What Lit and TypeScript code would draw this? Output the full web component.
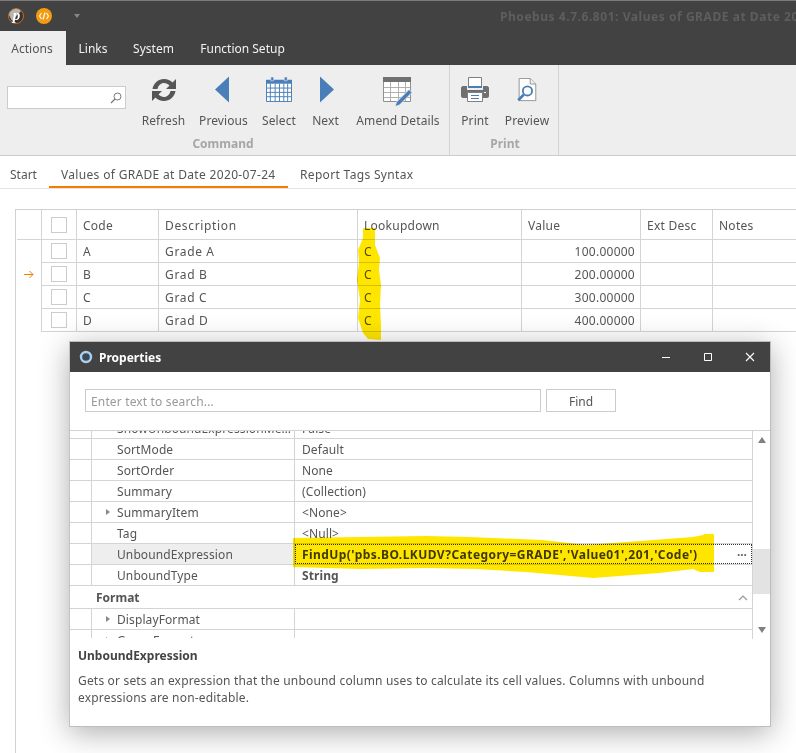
import { LitElement, html, css, svg } from "lit";
import { customElement } from "lit/decorators.js";

const refreshPath = "M.5 11C1.5 5 6.5 1 12 1c3.5 0 6.5 1.5 8.5 3.5L24 1v10H14l3.500-3.500C16 6 14 5 12 5 8.800 5 6.300 7.500 5.500 11z";
const refreshIcon = svg`<svg class="m3" width="24" height="24" viewBox="0 0 24 24" fill="#555"><path d=${refreshPath}/><path transform="rotate(180 12 12)" d=${refreshPath}/></svg>`;
const prevIcon = svg`<svg class="m1 ml" width="14" height="27" viewBox="0 0 15 28"><path d="M15 0V28L0 14z" fill="#4a7eb8"/></svg>`;
const nextIcon = svg`<svg class="m1 mr" width="14" height="27" viewBox="0 0 15 28"><path d="M0 0V28L15 14z" fill="#4a7eb8"/></svg>`;
const calIcon = svg`<svg class="m2" width="26" height="25" viewBox="0 0 27 26"><path d="M.500 3.500h26v22H.500z" fill="#fff" stroke="#4a7eb8"/><path d="M0 3h27v4H0z" fill="#4a7eb8"/><path d="M4.500 7v18M9.500 7v18M14 7v18M18.500 7v18M22.500 7v18M1 11.500h25M1 16h25M1 20.500h25" stroke="#4a7eb8" fill="none"/><path d="M5 0h3v4H5zM19 0h3v4h-3z" fill="#4a7eb8" stroke="#eee" stroke-width=".6"/></svg>`;
const amendIcon = svg`<svg class="m2" width="31" height="31" viewBox="0 0 31 31"><path d="M.5 .5h27v24H.500z" fill="#fff" stroke="#909090"/><path d="M0 0h28v5H0z" fill="#707070"/><path d="M1 10.500h26M1 15.500h26M1 20.500h26M7.500 5v19M15.500 5v19M22.500 5v19" stroke="#b0b0b0" fill="none"/><path d="M12 29.500l1.500-4.500L26 12.500l3 3L16.500 28z" fill="#4a7eb8" stroke="#eee" stroke-width=".8"/></svg>`;
const printIcon = svg`<svg class="m2" width="28" height="25" viewBox="0 0 28 25"><path d="M7.500 .5h13v10h-13z" fill="#fff" stroke="#808080"/><path d="M7 9h14v2H7z" fill="#4a7eb8"/><path d="M2 9h4v4h16V9h4c1 0 2 1 2 2v8c0 1-1 2-2 2h-4v-4H6v4H2c-1 0-2-1-2-2v-8c0-1 1-2 2-2z" fill="#707070"/><path d="M6.500 15.500h15v9h-15z" fill="#fff" stroke="#808080"/><path d="M10 18.500h8M10 21.500h8" stroke="#4a7eb8" fill="none"/><path d="M23 15h2v1h-2z" fill="#fff"/></svg>`;
const previewIcon = svg`<svg class="m3" width="22" height="24" viewBox="0 0 22 26"><path d="M2.500 .5h12l6 6v18h-18z" fill="#fff" stroke="#909090"/><path d="M14.500 .5v6h6" fill="#eee" stroke="#909090"/><circle cx="11.500" cy="14" r="5" fill="#fff" stroke="#4a7eb8" stroke-width="2"/><path d="M7.500 18L1.500 24" stroke="#4a7eb8" stroke-width="3" fill="none"/></svg>`;

const columns = ["Code", "Description", "Lookupdown", "Value", "Ext Desc", "Notes"];
const rows = [
  ["A", "Grade A", "C", "100.00000"],
  ["B", "Grad B", "C", "200.00000"],
  ["C", "Grad C", "C", "300.00000"],
  ["D", "Grad D", "C", "400.00000"],
];
const props: [string, string, string?][] = [
  ["ShowUnboundExpressionMenu", "False"],
  ["SortMode", "Default"],
  ["SortOrder", "None"],
  ["Summary", "(Collection)"],
  ["SummaryItem", "<None>", "exp"],
  ["Tag", "<Null>"],
  ["UnboundExpression", "FindUp('pbs.BO.LKUDV?Category=GRADE','Value01',201,'Code')", "sel"],
  ["UnboundType", "String", "bold"],
];

@customElement("app-root")
export class AppRoot extends LitElement {
  static styles = css`
    :host { display: block; position: relative; width: 796px; height: 753px; overflow: hidden; background: #fff;
      font-family: "Noto Sans", "Open Sans", sans-serif; font-size: 12px; color: #555; }
    .top { background: #424242; height: 65px; border-top: 1px solid #7a7a7a; box-sizing: border-box; }
    .qat { height: 30px; display: flex; align-items: center; padding-left: 8px; position: relative; }
    .qat .code { margin-left: 12px; }
    .qat .caret { margin-left: 22px; width: 0; height: 0; border: 3px solid transparent; border-top: 4px solid #888; border-bottom: 0; }
    .wintitle { margin-left: auto; width: 296px; overflow: hidden; white-space: nowrap; font-weight: 700; color: #5e5e5e; font-size: 12px; letter-spacing: .55px; }
    .tabs { display: flex; height: 34px; }
    .tabs div { color: #f2f2f2; line-height: 36px; text-align: center; box-sizing: border-box; }
    .tabs .active { background: #eee; color: #555; padding-right: 2px; }
    .t0 { width: 66px; } .t1 { width: 54px; } .t2 { width: 67px; } .t3 { width: 111px; }
    .ribbon { display: flex; height: 91px; background: #eee; border-bottom: 1px solid #ccc; box-sizing: border-box; }
    .searchsec { width: 135px; flex: none; padding: 21px 0 0 7px; box-sizing: border-box; }
    .searchbox { width: 119px; height: 23px; box-sizing: border-box; background: #fff; border: 1px solid #ccc; display: flex; align-items: center; justify-content: flex-end; padding-right: 3px; }
    .group { display: flex; flex-direction: column; border-right: 1px solid #d4d4d4; box-sizing: border-box; }
    .g1 { width: 315px; } .g2 { width: 109px; padding-left: 2px; }
    .btns { display: flex; }
    .btn { display: flex; flex-direction: column; align-items: center; padding-top: 10px; box-sizing: border-box; }
    .ic { height: 37px; display: flex; align-items: flex-start; }
    .m1 { margin-top: 1px; } .m2 { margin-top: 2px; } .m3 { margin-top: 3px; }
    .ml { margin-right: 3px; } .mr { margin-left: 3px; }
    .lb { line-height: 18px; white-space: nowrap; letter-spacing: .1px; }
    .glabel { line-height: 18px; margin-top: 5px; font-weight: 700; color: #a6a6a6; text-align: center; }
    .g1 .glabel { width: 176px; }
    .w0 { width: 57px; } .w1 { width: 63px; } .w2 { width: 48px; } .w3 { width: 45px; } .w4 { width: 100px; } .w5 { width: 46px; } .w6 { width: 58px; }
    .doctabs { display: flex; height: 33px; border-bottom: 1px solid #e4e4e4; box-sizing: border-box; padding-left: 10px; letter-spacing: .33px; }
    .doctabs div { line-height: 38px; white-space: nowrap; height: 32px; box-sizing: border-box; }
    .d0 { width: 39px; letter-spacing: 0; }
    .d1 { width: 239px; padding-left: 12px; border-bottom: 2px solid #f57c00; }
    .d2 { padding-left: 12px; }
    .grid { margin: 20px 0 0 15px; border-top: 1px solid #d0d0d0; border-left: 1px solid #d0d0d0; height: 600px; }
    .gr { display: grid; grid-template-columns: 25px 35px 82px 199px 164px 119px 72px 84px; letter-spacing: .25px; }
    .gr > div { border-left: 1px solid #d4d4d4; border-bottom: 1px solid #d4d4d4; box-sizing: border-box; padding-left: 6px; white-space: nowrap; height: 23px; line-height: 22px; display: flex; align-items: center; }
    .gr > div:not(.chk) { padding-top: 2px; }
    .gr > div:nth-child(4) { letter-spacing: .65px; }
    .gr > div:first-child { border-left: 0; border-bottom-color: transparent; padding: 0 0 0 8px; }
    .gr > .chk { padding-left: 9px; }
    .gr .num { justify-content: flex-end; padding: 2px 5px 0 0; }
    .head > div { height: 30px; }
    .head > div:first-child { border-bottom-color: #d4d4d4; margin-left: 1px; }
    .box { width: 16px; height: 16px; box-sizing: border-box; border: 1px solid #ccc; background: #fff; }
    .dialog { position: absolute; left: 69px; top: 341px; width: 702px; height: 386px; box-sizing: border-box; background: #fff; border: 1px solid #bdbdbd; border-left-color: #c4c4c4;
      box-shadow: 0 6px 28px rgba(0, 0, 0, .32); display: flex; flex-direction: column; }
    .dtitle { height: 30px; flex: none; background: #424242; display: flex; align-items: center; padding: 0 15px 0 9px; color: #fff; font-weight: 700; }
    .dtitle .name { margin-left: 6px; }
    .winbtns { margin-left: auto; display: flex; gap: 32px; }
    .winbtns svg { display: block; }
    .dsearch { display: flex; gap: 5px; padding: 17px 0 0 15px; height: 41px; flex: none; box-sizing: border-box; }
    .input { width: 456px; height: 23px; box-sizing: border-box; border: 1px solid #ccc; padding-left: 5px; line-height: 23px; color: #999; letter-spacing: .15px; }
    .find { width: 70px; height: 23px; box-sizing: border-box; border: 1px solid #ccc; text-align: center; line-height: 23px; }
    .pgrid { border-top: 1px solid #d4d4d4; height: 208px; flex: none; display: flex; overflow: hidden; margin-top: 17px; }
    .plist { width: 682px; flex: none; height: 207px; overflow: hidden; }
    .pinner { margin-top: -13px; }
    .prow { display: grid; grid-template-columns: 22px 203px 457px; height: 21px; border-bottom: 1px solid #d4d4d4; box-sizing: border-box; }
    .prow > div { line-height: 22px; white-space: nowrap; overflow: hidden; box-sizing: border-box; letter-spacing: .1px; }
    .gut { border-right: 1px solid #d4d4d4; }
    .pname { padding-left: 25px; border-right: 1px solid #d4d4d4; position: relative; text-overflow: ellipsis; }
    .pval { padding-left: 7px; }
    .tri { position: absolute; left: 14px; top: 7px; width: 0; height: 0; border: 3px solid transparent; border-left: 4px solid #8a8a8a; border-right: 0; }
    .prow.sel .pname { background: #eee; }
    .prow.sel > .pval { font-weight: 700; color: #3f3f3f; border: 1px dotted #333; display: flex; justify-content: space-between; padding: 0 4px 0 6px; line-height: 20px; letter-spacing: .44px; }
    .prow.bold .pval { font-weight: 700; }
    .dots { font-weight: 700; letter-spacing: 0; color: #666; }
    .cat { height: 23px; border-bottom: 1px solid #d4d4d4; box-sizing: border-box; padding: 0 4px 0 26px; line-height: 23px; font-weight: 700; display: flex; justify-content: space-between; }
    .cat svg { margin-top: 1px; }
    .scroll { flex: 1; border-left: 1px solid #d4d4d4; display: flex; flex-direction: column; }
    .arrow { height: 18px; flex: none; display: flex; align-items: center; justify-content: center; }
    .sp1 { height: 100px; flex: none; }
    .thumb { height: 45px; background: #e3e3e3; flex: none; }
    .sp2 { flex: 1; }
    .desc { padding: 8px 8px 0 8px; }
    .desc b { display: block; line-height: 18px; color: #444; }
    .desc p { margin: 7px 0 0; line-height: 17px; width: 650px; letter-spacing: .18px; }
    .hl { position: absolute; left: 0; top: 0; pointer-events: none; mix-blend-mode: multiply; }
  `;

  render() {
    return html`
      <div class="top">
        <div class="qat">
          <svg width="16" height="16" viewBox="0 0 16 16"><circle cx="8" cy="8" r="7.500" fill="#333" stroke="#c8691c"/><path d="M1 7a7 7 0 0 1 12-4L4 13z" fill="#b5b5b5"/><text x="8.500" y="12" text-anchor="middle" font-family="Liberation Serif" font-style="italic" font-weight="700" font-size="15" fill="#fff">p</text></svg>
          <svg class="code" width="16" height="16" viewBox="0 0 16 16"><circle cx="8" cy="8" r="8" fill="#f39c12"/><path d="M5.500 5L3.500 8l2 3M10.500 5l2 3-2 3M9 4.500L7 11.500" fill="none" stroke="#fff" stroke-width="1.100"/></svg>
          <div class="caret"></div>
          <div class="wintitle">Phoebus 4.7.6.801: Values of GRADE at Date 2020-07-24</div>
        </div>
        <div class="tabs">
          <div class="t0 active">Actions</div><div class="t1">Links</div><div class="t2">System</div><div class="t3">Function Setup</div>
        </div>
      </div>
      <div class="ribbon">
        <div class="searchsec"><div class="searchbox">
          <svg width="12" height="12" viewBox="0 0 12 12"><circle cx="7.500" cy="4.500" r="3.500" fill="none" stroke="#777"/><path d="M5 7L1 11" stroke="#777" stroke-width="1.300"/></svg>
        </div></div>
        <div class="group g1">
          <div class="btns">
            ${this.btn("w0", refreshIcon, "Refresh")}${this.btn("w1", prevIcon, "Previous")}${this.btn("w2", calIcon, "Select")}${this.btn("w3", nextIcon, "Next")}${this.btn("w4", amendIcon, "Amend Details")}
          </div>
          <div class="glabel">Command</div>
        </div>
        <div class="group g2">
          <div class="btns">${this.btn("w5", printIcon, "Print")}${this.btn("w6", previewIcon, "Preview")}</div>
          <div class="glabel">Print</div>
        </div>
      </div>
      <div class="doctabs">
        <div class="d0">Start</div><div class="d1">Values of GRADE at Date 2020-07-24</div><div class="d2">Report Tags Syntax</div>
      </div>
      <div class="grid">
        <div class="gr head">
          <div></div><div class="chk"><div class="box"></div></div>
          ${columns.map((c) => html`<div>${c}</div>`)}
        </div>
        ${rows.map((r, i) => html`<div class="gr">
          <div>${i === 1 ? html`<svg width="10" height="9" viewBox="0 0 10 9"><path d="M0 4.500h9M5.500 1L9 4.500 5.500 8" fill="none" stroke="#f57c00"/></svg>` : ""}</div>
          <div class="chk"><div class="box"></div></div>
          <div>${r[0]}</div><div>${r[1]}</div><div>${r[2]}</div><div class="num">${r[3]}</div><div></div><div></div>
        </div>`)}
      </div>
      <div class="dialog">
        <div class="dtitle">
          <svg width="14" height="14" viewBox="0 0 14 14"><circle cx="7" cy="7" r="5" fill="#3d4a55" stroke="#a9d0ee" stroke-width="2.400"/></svg>
          <span class="name">Properties</span>
          <div class="winbtns">
            <svg width="10" height="10" viewBox="0 0 10 10"><path d="M1 5.500h8" stroke="#fff"/></svg>
            <svg width="10" height="10" viewBox="0 0 10 10"><path d="M1.500 1.500h7v7h-7z" fill="none" stroke="#fff"/></svg>
            <svg width="10" height="10" viewBox="0 0 10 10"><path d="M1 1l8 8M9 1l-8 8" stroke="#fff" stroke-width="1.100"/></svg>
          </div>
        </div>
        <div class="dsearch"><div class="input">Enter text to search...</div><div class="find">Find</div></div>
        <div class="pgrid">
          <div class="plist"><div class="pinner">
            ${props.map(([n, v, k]) => html`<div class="prow ${k ?? ""}">
              <div class="gut"></div>
              <div class="pname">${k === "exp" ? html`<span class="tri"></span>` : ""}${n}</div>
              <div class="pval">${v}${k === "sel" ? html`<span class="dots">···</span>` : ""}</div>
            </div>`)}
            <div class="cat"><span>Format</span><svg width="10" height="23" viewBox="0 0 10 23"><path d="M1 13l4-4 4 4" fill="none" stroke="#999" stroke-width="1.200"/></svg></div>
            <div class="prow"><div class="gut"></div><div class="pname"><span class="tri"></span>DisplayFormat</div><div class="pval"></div></div>
            <div class="prow"><div class="gut"></div><div class="pname"><span class="tri"></span>GroupFormat</div><div class="pval"></div></div>
          </div></div>
          <div class="scroll">
            <div class="arrow"><svg width="8" height="6" viewBox="0 0 8 6"><path d="M4 0l4 6H0z" fill="#808080"/></svg></div>
            <div class="sp1"></div><div class="thumb"></div><div class="sp2"></div>
            <div class="arrow"><svg width="8" height="6" viewBox="0 0 8 6"><path d="M0 0h8L4 6z" fill="#808080"/></svg></div>
          </div>
        </div>
        <div class="desc">
          <b>UnboundExpression</b>
          <p>Gets or sets an expression that the unbound column uses to calculate its cell values. Columns with unbound expressions are non-editable.</p>
        </div>
      </div>
      <svg class="hl" width="796" height="753" viewBox="0 0 796 753">
        <path fill="#ffe600" d="M363 228L375 228L375 245L380 258L379 270L381 285L380 305L381 325L381 340L368 339L363 333L358 318L360 300L357 280L359 262L358 250L363 238z"/>
        <path fill="#ffe600" d="M293 538L360 537L426 536L470 537L543 540L586 545L626 542L693 537L703 535L704 534L714 534L714 572L700 572L693 569L659 573L593 578L526 572L476 569L426 568L360 569L293 567z"/>
      </svg>
    `;
  }

  private btn(w: string, icon: unknown, label: string) {
    return html`<div class="btn ${w}"><div class="ic">${icon}</div><div class="lb">${label}</div></div>`;
  }
}
